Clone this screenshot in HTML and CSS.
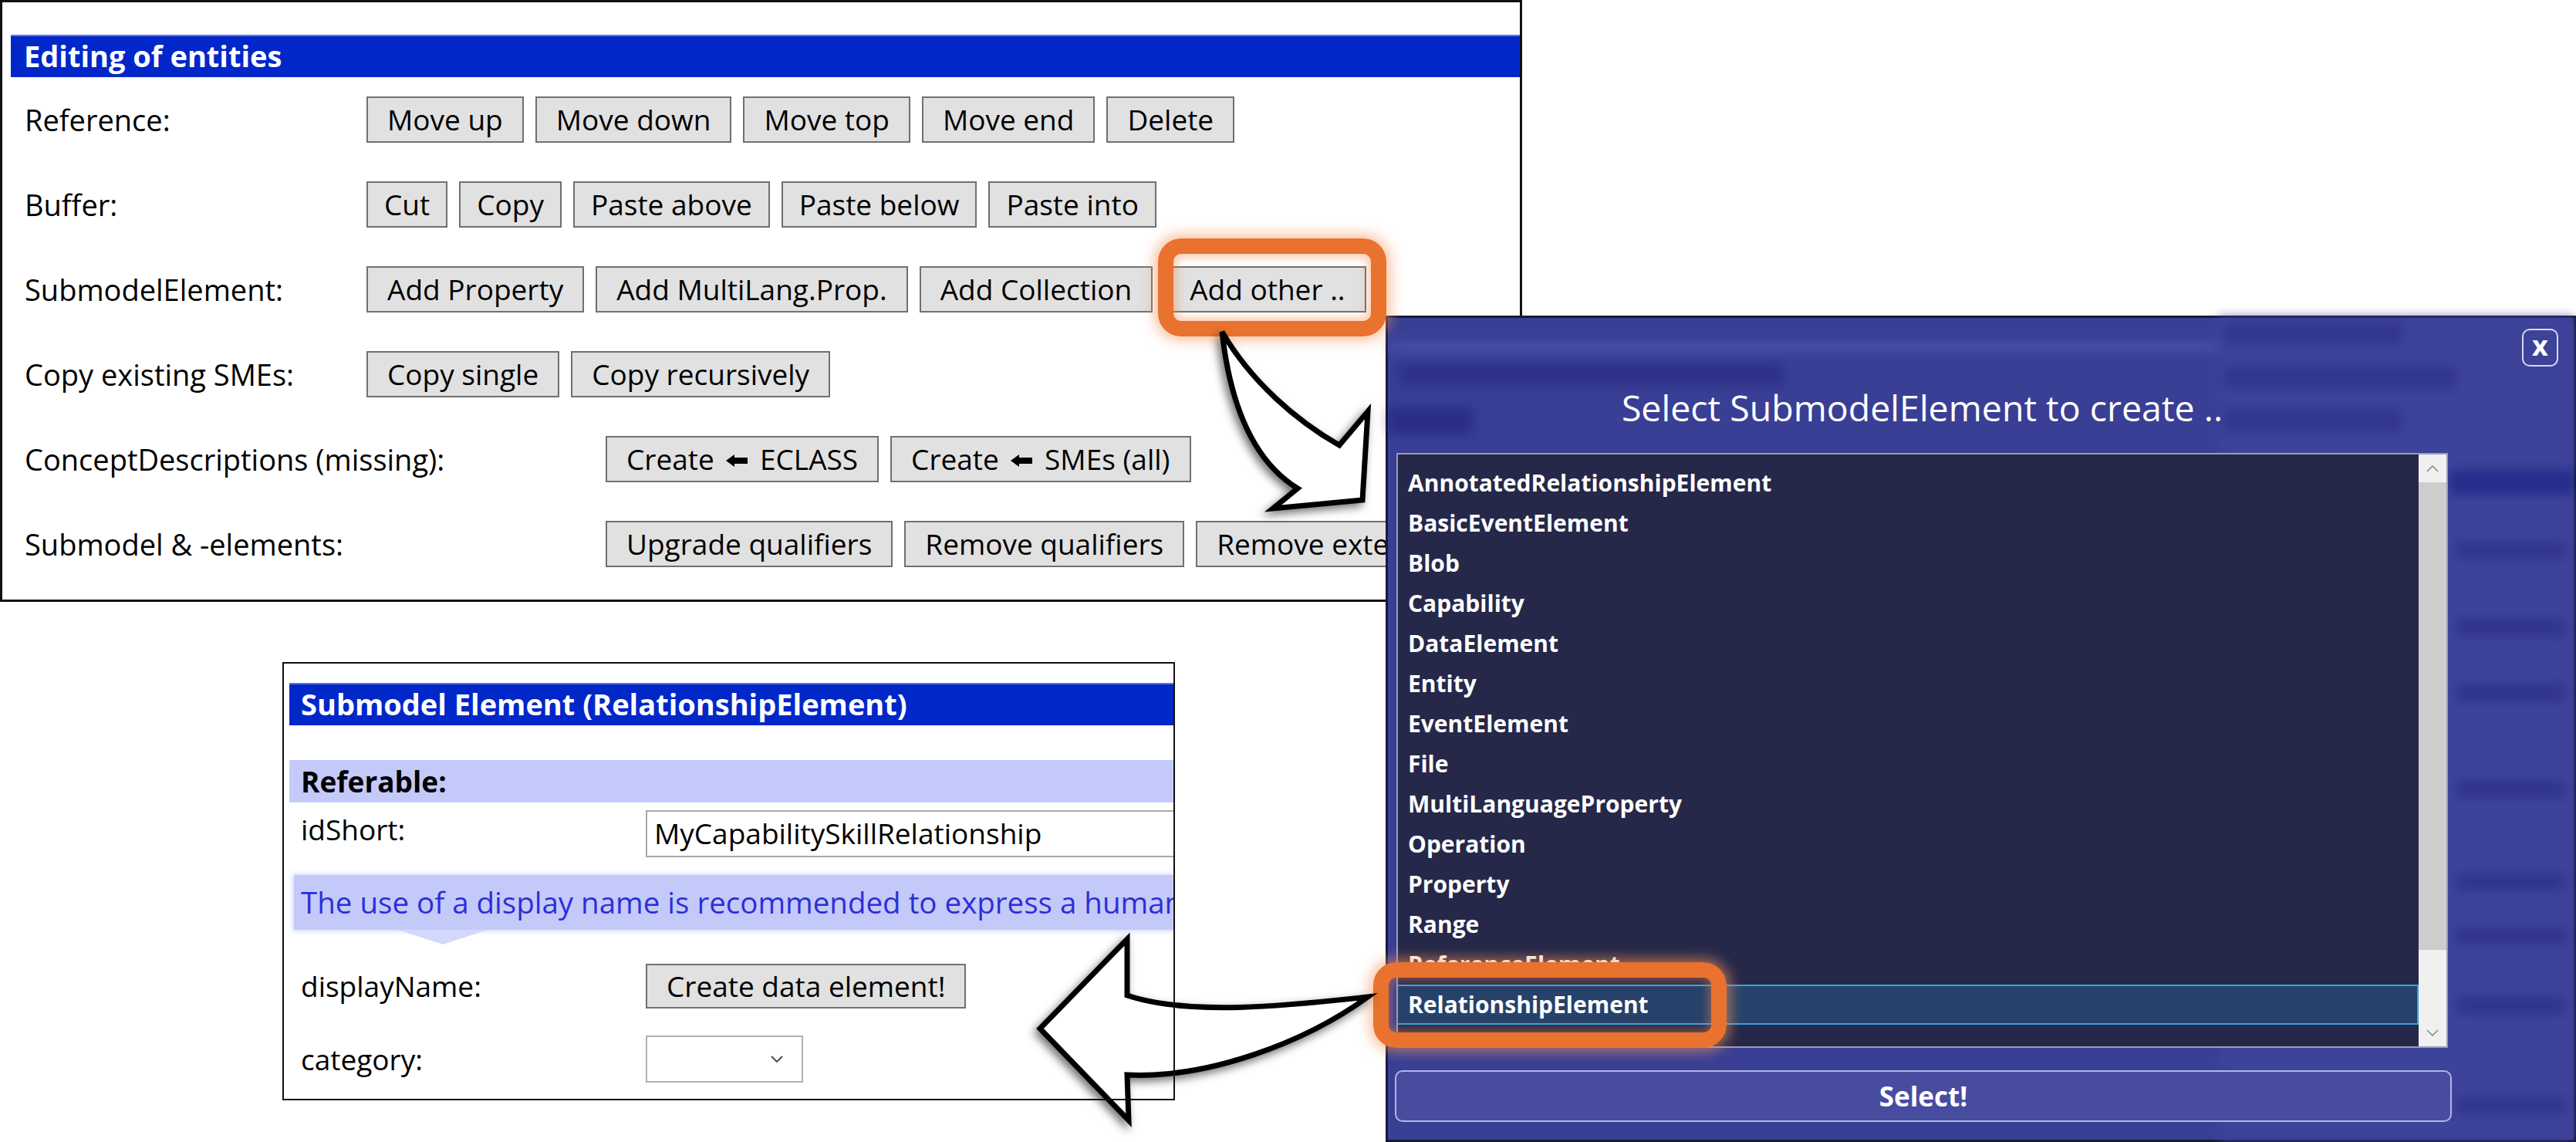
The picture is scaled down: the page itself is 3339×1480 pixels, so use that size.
FILE: index.html
```html
<!DOCTYPE html>
<html lang="en">
<head>
<meta charset="utf-8">
<title>Select SubmodelElement to create</title>
<link rel="stylesheet" href="styles.css">
</head>
<body>
<section class="panel panel-edit">
  <div class="hdr">Editing of entities</div>
  <div class="rows rows-a">
    <div class="row"><span class="lbl">Reference:</span><div class="btns"><button class="btn">Move up</button><button class="btn">Move down</button><button class="btn">Move top</button><button class="btn">Move end</button><button class="btn">Delete</button></div></div>
    <div class="row row-tight"><span class="lbl">Buffer:</span><div class="btns"><button class="btn">Cut</button><button class="btn">Copy</button><button class="btn">Paste above</button><button class="btn">Paste below</button><button class="btn">Paste into</button></div></div>
    <div class="row"><span class="lbl">SubmodelElement:</span><div class="btns"><button class="btn">Add Property</button><button class="btn">Add MultiLang.Prop.</button><button class="btn">Add Collection</button><button class="btn btn-other">Add other ..</button></div></div>
    <div class="row"><span class="lbl">Copy existing SMEs:</span><div class="btns"><button class="btn">Copy single</button><button class="btn">Copy recursively</button></div></div>
  </div>
  <div class="rows rows-b">
    <div class="row"><span class="lbl">ConceptDescriptions (missing):</span><div class="btns"><button class="btn">Create <svg class="larr" viewBox="0 0 28 16" width="28" height="16"><polygon points="0,8 11,0 11,4 28,4 28,12 11,12 11,16" fill="#000"/></svg> ECLASS</button><button class="btn">Create <svg class="larr" viewBox="0 0 28 16" width="28" height="16"><polygon points="0,8 11,0 11,4 28,4 28,12 11,12 11,16" fill="#000"/></svg> SMEs (all)</button></div></div>
    <div class="row"><span class="lbl">Submodel &amp; -elements:</span><div class="btns"><button class="btn">Upgrade qualifiers</button><button class="btn">Remove qualifiers</button><button class="btn">Remove exte</button></div></div>
  </div>
</section>

<section class="panel panel-sme">
  <div class="hdr hdr-sme">Submodel Element (RelationshipElement)</div>
  <div class="band">Referable:</div>
  <div class="field field-top"><span class="flbl">idShort:</span><div class="textbox">MyCapabilitySkillRelationship</div></div>
  <div class="hint">The use of a display name is recommended to express a human</div>
  <div class="hint-tip"></div>
  <div class="field f-dn"><span class="flbl">displayName:</span><button class="btn btn-dn">Create data element!</button></div>
  <div class="field f-cat"><span class="flbl">category:</span><div class="combo"><svg class="chev" viewBox="0 0 16 10" width="16" height="10"><polyline points="1,1 8,8 15,1" fill="none" stroke="#444" stroke-width="1.8"/></svg></div></div>
</section>

<section class="dlg">
  <div class="dlg-close">x</div>
  <h2 class="dlg-title">Select SubmodelElement to create ..</h2>
  <div class="list">
    <ul class="items">
      <li class="item">AnnotatedRelationshipElement</li>
      <li class="item">BasicEventElement</li>
      <li class="item">Blob</li>
      <li class="item">Capability</li>
      <li class="item">DataElement</li>
      <li class="item">Entity</li>
      <li class="item">EventElement</li>
      <li class="item">File</li>
      <li class="item">MultiLanguageProperty</li>
      <li class="item">Operation</li>
      <li class="item">Property</li>
      <li class="item">Range</li>
      <li class="item">ReferenceElement</li>
      <li class="item sel">RelationshipElement</li>
    </ul>
    <div class="sb">
      <div class="sb-btn"><svg viewBox="0 0 16 9" width="16" height="9"><polyline points="1,8 8,1 15,8" fill="none" stroke="#8a8a8a" stroke-width="1.6"/></svg></div>
      <div class="sb-thumb"></div>
      <div class="sb-rest"></div>
      <div class="sb-btn"><svg viewBox="0 0 16 9" width="16" height="9"><polyline points="1,1 8,8 15,1" fill="none" stroke="#8a8a8a" stroke-width="1.6"/></svg></div>
    </div>
  </div>
  <button class="select-btn">Select!</button>
</section>

<div class="hl hl-1"></div>
<div class="hl hl-2"></div>

<svg class="arrows" viewBox="0 0 3339 1480" width="3339" height="1480">
  <defs>
    <filter id="sh" x="-20%" y="-20%" width="140%" height="140%">
      <feDropShadow dx="-4" dy="5" stdDeviation="6" flood-color="#000" flood-opacity="0.55"/>
    </filter>
  </defs>
  <path filter="url(#sh)" d="M1584 430 C1594 520 1622 596 1682 633 L1650 659 L1766 648 L1773 533 L1736 577 C1680 545 1622 495 1584 430 Z" fill="#fff" stroke="#000" stroke-width="7" stroke-linejoin="miter"/>
  <path filter="url(#sh)" d="M1773 1292 C1680 1302 1545 1318 1461 1290 L1461 1217 L1348 1333 L1463 1452 L1461 1393 C1565 1398 1690 1352 1773 1292 Z" fill="#fff" stroke="#000" stroke-width="7" stroke-linejoin="miter"/>
</svg>
</body>
</html>
```

FILE: styles.css
```css
* { box-sizing: border-box; }
html, body { margin: 0; padding: 0; }
body {
  width: 3339px;
  height: 1480px;
  overflow: hidden;
  position: relative;
  background: #fff;
  color: #000;
  font-family: "Open Sans", "Noto Sans", sans-serif;
}

/* ---------- generic panel ---------- */
.panel { position: absolute; background: #fff; overflow: hidden; }

.hdr {
  background: #0127c9;
  color: #fff;
  font-weight: 700;
  font-size: 38px;
  height: 55px;
  line-height: 55px;
  padding-left: 17px;
  white-space: nowrap;
  box-shadow: inset 0 2px 0 #5d74e0;
}

.btn {
  font-family: inherit;
  font-size: 37px;
  height: 60px;
  padding: 0 25px;
  border: 2px solid #707070;
  background: #e1e1e1;
  color: #000;
  white-space: nowrap;
  line-height: 56px;
  flex: none;
}
.larr { display: inline-block; vertical-align: middle; margin: -4px 6px 0; }

/* ---------- editing of entities ---------- */
.panel-edit {
  left: 0; top: 0;
  width: 1973px; height: 780px;
  border: 3px solid #111;
  padding: 42px 0 0 11px;
}
.rows { display: flex; flex-direction: column; gap: 50px; padding-left: 18px; }
.rows-a { padding-top: 25px; }
.rows-b { margin-top: 50px; }
.row { display: flex; align-items: center; height: 60px; }
.row-tight .btn { padding: 0 21px; }
.lbl { font-size: 38px; white-space: nowrap; flex: none; }
.rows-a .lbl { width: 443px; }
.rows-b .lbl { width: 753px; }
.btns { display: flex; gap: 15px; }
.btn-other { margin-left: 6px; }

/* ---------- submodel element panel ---------- */
.panel-sme {
  left: 366px; top: 858px;
  width: 1157px; height: 568px;
  padding: 27px 0 0 9px;
}
.panel-sme::after {
  content: "";
  position: absolute;
  left: 0; top: 0; right: 0; bottom: 0;
  border: 2px solid #111;
  z-index: 5;
  pointer-events: none;
}
.hdr-sme { padding-left: 15px; }
.band {
  margin-top: 45px;
  height: 55px;
  line-height: 55px;
  background: #c3cafa;
  font-weight: 700;
  font-size: 37px;
  padding-left: 15px;
}
.field { display: flex; align-items: center; }
.field-top { margin-top: 10px; align-items: flex-start; }
.flbl { width: 462px; flex: none; padding-left: 15px; font-size: 37px; line-height: 50px; white-space: nowrap; }
.textbox {
  width: 760px;
  flex: none;
  height: 61px;
  border: 2px solid #a9a9a9;
  padding-left: 9px;
  font-size: 37px;
  line-height: 56px;
  white-space: nowrap;
}
.hint {
  margin: 23px 0 0 6px;
  height: 71px;
  line-height: 71px;
  background: #c3cafa;
  color: #2e2ed9;
  font-size: 38.5px;
  padding-left: 9px;
  white-space: nowrap;
  overflow: hidden;
  box-shadow: 0 0 6px 2px #d6dbfc;
}
.hint-tip {
  width: 0; height: 0;
  margin-left: 141px;
  border-left: 58px solid transparent;
  border-right: 58px solid transparent;
  border-top: 19px solid #d3d9fb;
}
.f-dn { margin-top: 25px; height: 58px; }
.btn-dn { height: 58px; padding: 0 25px; line-height: 54px; }
.f-cat { margin-top: 35px; height: 61px; }
.combo {
  width: 204px;
  height: 61px;
  border: 2px solid #b0b0b0;
  background: #fff;
  display: flex;
  align-items: center;
  justify-content: flex-end;
  padding-right: 24px;
}

/* ---------- dialog ---------- */
.dlg {
  position: absolute;
  left: 1796px; top: 409px;
  width: 1543px; height: 1071px;
  border: 3px solid #171a33;
  background: #393f95;
  z-index: 2;
  padding: 86px 0 0 11px;
  color: #fff;
}
.dlg::before {
  content: "";
  position: absolute;
  left: 0; top: 0; right: 0; bottom: 0;
  z-index: -1;
  filter: blur(7px);
  background:
    linear-gradient(rgba(22,26,110,.45), rgba(22,26,110,.45)) 0 116px / 110px 34px no-repeat,
    linear-gradient(rgba(22,26,110,.35), rgba(22,26,110,.35)) 14px 60px / 500px 28px no-repeat,
    linear-gradient(rgba(90,98,185,.45), rgba(90,98,185,.45)) 0 30px / 1076px 14px no-repeat,
    linear-gradient(rgba(22,26,110,.30), rgba(22,26,110,.30)) 1085px 8px / 230px 26px no-repeat,
    linear-gradient(rgba(22,26,110,.30), rgba(22,26,110,.30)) 1085px 62px / 300px 30px no-repeat,
    linear-gradient(rgba(22,26,110,.30), rgba(22,26,110,.30)) 1085px 118px / 230px 30px no-repeat,
    linear-gradient(#272c8d, #272c8d) 1376px 197px / 170px 32px no-repeat,
    linear-gradient(rgba(22,26,110,.35), rgba(22,26,110,.35)) 1385px 290px / 140px 22px no-repeat,
    linear-gradient(rgba(22,26,110,.35), rgba(22,26,110,.35)) 1385px 390px / 140px 22px no-repeat,
    linear-gradient(rgba(22,26,110,.35), rgba(22,26,110,.35)) 1385px 475px / 140px 22px no-repeat,
    linear-gradient(rgba(22,26,110,.35), rgba(22,26,110,.35)) 1385px 600px / 140px 22px no-repeat,
    linear-gradient(rgba(22,26,110,.35), rgba(22,26,110,.35)) 1385px 720px / 140px 22px no-repeat,
    linear-gradient(rgba(22,26,110,.35), rgba(22,26,110,.35)) 1385px 790px / 140px 22px no-repeat,
    linear-gradient(rgba(22,26,110,.35), rgba(22,26,110,.35)) 1385px 880px / 140px 22px no-repeat,
    linear-gradient(rgba(22,26,110,.35), rgba(22,26,110,.35)) 1385px 1010px / 140px 22px no-repeat,
    linear-gradient(#3d4399, #3d4399) 1076px 0 / 100% 100% no-repeat;
}
.dlg-close {
  position: absolute;
  right: 20px; top: 14px;
  width: 47px; height: 49px;
  border: 2px solid #d6d8f4;
  border-radius: 10px;
  font-weight: 700;
  font-size: 36px;
  line-height: 40px;
  text-align: center;
}
.dlg-title {
  margin: 0;
  width: 1363px;
  height: 60px;
  line-height: 60px;
  text-align: center;
  font-size: 46.5px;
  font-weight: 400;
  white-space: nowrap;
}
.list {
  margin-top: 29px;
  width: 1363px;
  height: 771px;
  border: 2px solid #9c9eb4;
  background: #262849;
  display: grid;
  grid-template-columns: 1fr 36px;
  overflow: hidden;
}
.items { list-style: none; margin: 0; padding: 11px 0 0; overflow: hidden; }
.item {
  height: 52px;
  line-height: 52px;
  font-weight: 700;
  font-size: 30px;
  padding-left: 13px;
  white-space: nowrap;
}
.item.sel {
  background: #26426a;
  border: 2px solid #35a2e4;
  border-left: none;
  line-height: 48px;
}
.sb { display: flex; flex-direction: column; background: #f0f0f0; }
.sb-btn { height: 36px; flex: none; display: flex; align-items: center; justify-content: center; }
.sb-thumb { height: 606px; flex: none; background: #cdcdcd; }
.sb-rest { flex: 1; }
.select-btn {
  display: block;
  margin: 29px 0 0 -2px;
  width: 1370px;
  height: 67px;
  border: 2px solid #b2b6e8;
  border-radius: 10px;
  background: #474c9f;
  color: #fff;
  font-family: inherit;
  font-weight: 700;
  font-size: 35px;
}

/* ---------- annotations ---------- */
.hl {
  position: absolute;
  z-index: 3;
  border: 20px solid #e8722e;
  border-radius: 30px;
  box-shadow: 0 0 16px 6px rgba(245, 150, 90, .55), inset 0 0 12px 4px rgba(240, 130, 70, .45);
}
.hl-1 { left: 1501px; top: 309px; width: 296px; height: 127px; }
.hl-2 { left: 1780px; top: 1247px; width: 458px; height: 111px; }

.arrows {
  position: absolute;
  left: 0; top: 0;
  z-index: 4;
  pointer-events: none;
}
```
